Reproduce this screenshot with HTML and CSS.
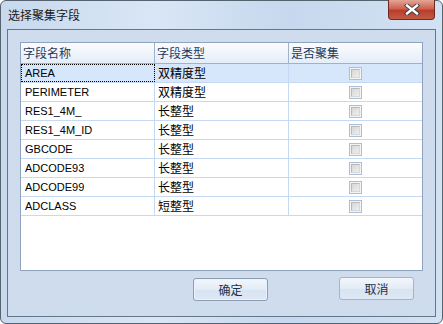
FILE: index.html
```html
<!DOCTYPE html>
<html>
<head>
    <title>选择聚集字段</title>
    <link rel="stylesheet" href="styles.css">
</head>
<body>
    <div class="window">
        <div class="titlebar">
            <span class="title">选择聚集字段</span>
            <button class="close-btn">
                <svg width="16" height="11" viewBox="0 0 16 11">
                    <path d="M3 1.5 L13 9.5 M13 1.5 L3 9.5" stroke="#3a3a3a" stroke-width="4.2" stroke-linecap="square"/>
                    <path d="M3 1.5 L13 9.5 M13 1.5 L3 9.5" stroke="#fff" stroke-width="2.4" stroke-linecap="square"/>
                </svg>
            </button>
        </div>
        <div class="client">
            <div class="grid">
                <div class="grid-row header">
                    <div class="cell">字段名称</div>
                    <div class="cell">字段类型</div>
                    <div class="cell">是否聚集</div>
                </div>
                <div class="grid-row selected">
                    <div class="cell name focused">AREA</div>
                    <div class="cell">双精度型</div>
                    <div class="cell check"><span class="checkbox"></span></div>
                </div>
                <div class="grid-row">
                    <div class="cell name">PERIMETER</div>
                    <div class="cell">双精度型</div>
                    <div class="cell check"><span class="checkbox"></span></div>
                </div>
                <div class="grid-row">
                    <div class="cell name">RES1_4M_</div>
                    <div class="cell">长整型</div>
                    <div class="cell check"><span class="checkbox"></span></div>
                </div>
                <div class="grid-row">
                    <div class="cell name">RES1_4M_ID</div>
                    <div class="cell">长整型</div>
                    <div class="cell check"><span class="checkbox"></span></div>
                </div>
                <div class="grid-row">
                    <div class="cell name">GBCODE</div>
                    <div class="cell">长整型</div>
                    <div class="cell check"><span class="checkbox"></span></div>
                </div>
                <div class="grid-row">
                    <div class="cell name">ADCODE93</div>
                    <div class="cell">长整型</div>
                    <div class="cell check"><span class="checkbox"></span></div>
                </div>
                <div class="grid-row">
                    <div class="cell name">ADCODE99</div>
                    <div class="cell">长整型</div>
                    <div class="cell check"><span class="checkbox"></span></div>
                </div>
                <div class="grid-row">
                    <div class="cell name">ADCLASS</div>
                    <div class="cell">短整型</div>
                    <div class="cell check"><span class="checkbox"></span></div>
                </div>
            </div>
            <div class="actions">
                <button class="btn default">确定</button>
                <button class="btn">取消</button>
            </div>
        </div>
    </div>
</body>
</html>
```

FILE: styles.css
```css
body {
    margin: 0;
    background-color: #fff;
    font-family: "Noto Sans CJK SC", sans-serif;
    font-size: 12px;
}

.window {
    width: 443px;
    height: 324px;
    box-sizing: border-box;
    border: 1px solid #55626f;
    border-radius: 6px;
    display: flex;
    flex-direction: column;
    background: linear-gradient(to right, #c8d9ee, #d9e6f5 35%, #c6d8ee 65%, #d3e2f3);
}

.titlebar {
    height: 28px;
    display: flex;
    align-items: flex-start;
}

.title {
    padding: 5px 0 0 7px;
    line-height: 18px;
    color: #1a1a1a;
}

.close-btn {
    margin: -1px 7px 0 auto;
    width: 47px;
    height: 20px;
    border: 1px solid #6f2a22;
    border-top: none;
    border-radius: 0 0 4px 4px;
    background: linear-gradient(#e3a596, #cf6250 45%, #b83d2b 55%, #c35b45);
    padding: 0;
    display: flex;
    align-items: center;
    justify-content: center;
}

.client {
    flex: 1;
    margin: 0 6px 6px 6px;
    border: 1px solid #66768a;
    background-color: #cfdcee;
    display: flex;
    flex-direction: column;
}

.grid {
    margin: 12px 12px 0 12px;
    height: 229px;
    box-sizing: border-box;
    border: 1px solid #8fa3c0;
    background-color: #fff;
}

.grid-row {
    display: grid;
    grid-template-columns: 134px 134px 1fr;
    height: 19px;
    box-sizing: border-box;
    border-bottom: 1px solid #c5d9f3;
}

.grid-row .cell {
    border-right: 1px solid #c5d9f3;
    padding-left: 3px;
    line-height: 18px;
    color: #000;
    white-space: nowrap;
}

.grid-row .cell:last-child {
    border-right: none;
}

.header {
    height: 21px;
    border-bottom: 1px solid #9fb2cc;
    background: linear-gradient(#fbfcfe, #e4edf8);
}

.header .cell {
    border-right: 1px solid #9fb2cc;
    padding-left: 2px;
    line-height: 20px;
    color: #1e395b;
}

.cell.name {
    font-family: "Liberation Sans", Arial, sans-serif;
    font-size: 11px;
    padding-left: 4px;
}

.selected {
    background-color: #d6e6fb;
}

.cell.focused {
    outline: 1px dotted #000;
    outline-offset: -1px;
}

.cell.check {
    display: flex;
    align-items: center;
    justify-content: center;
    padding-left: 0;
}

.checkbox {
    width: 13px;
    height: 13px;
    box-sizing: border-box;
    border: 1px solid #aebed4;
    background-color: #f4f4f4;
    padding: 1px;
}

.checkbox::after {
    content: "";
    display: block;
    width: 9px;
    height: 9px;
    box-sizing: border-box;
    border: 1px solid #b9b9b9;
    border-right-color: #d8d8d8;
    border-bottom-color: #d8d8d8;
    background: linear-gradient(135deg, #d8d8d8, #eeeeee);
}

.actions {
    display: flex;
    justify-content: flex-end;
    align-items: flex-start;
    gap: 71px;
    padding: 6px 21px 0 0;
}

.btn {
    width: 75px;
    height: 23px;
    border: 1px solid #a6b4c7;
    border-radius: 3px;
    background: linear-gradient(#f3f7fc, #e3ebf6 50%, #d8e3f1 51%, #dfe8f4);
    font-family: "Noto Sans CJK SC", sans-serif;
    font-size: 12px;
    color: #1e2f4b;
    padding: 0;
}

.btn.default {
    margin-top: 1px;
    border-color: #8d9db3;
    box-shadow: inset 0 0 0 1px #eaf3fd;
}
```
